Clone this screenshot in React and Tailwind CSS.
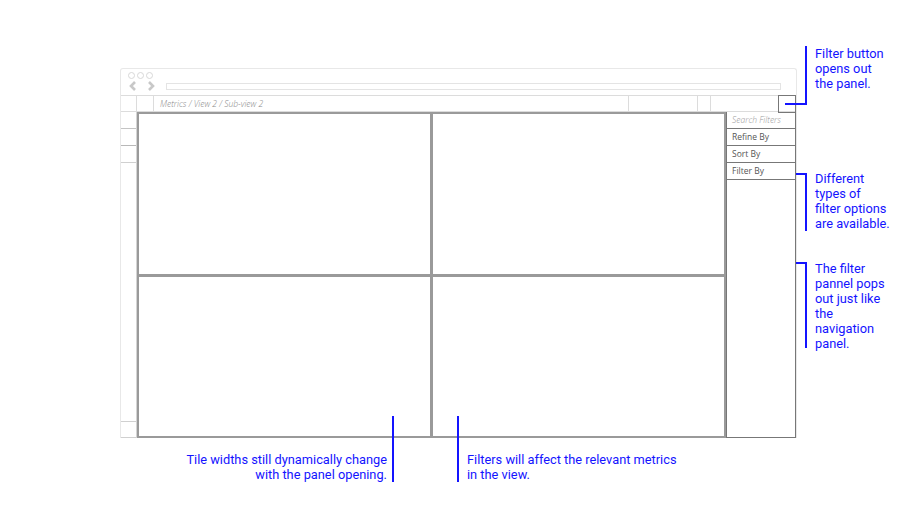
import React from 'react';

const ui = { fontFamily: '"Open Sans", "Liberation Sans", sans-serif' };
const noteFont = { fontFamily: 'Roboto, "Liberation Sans", sans-serif' };

function Note({ className, lines, align = 'left' }) {
  return (
    <div
      className={`absolute text-[12.8px] leading-[15px] text-[#1414ff] ${align === 'right' ? 'text-right' : ''} ${className}`}
      style={noteFont}
    >
      {lines.map((l, i) => (
        <div key={i} className="whitespace-nowrap h-[15px]">{l}</div>
      ))}
    </div>
  );
}

function Chrome() {
  return (
    <div className="h-[26px] relative">
      <div className="flex gap-[2px] pl-[7px] pt-[3px]">
        {[0, 1, 2].map(i => (
          <span key={i} className="w-[7px] h-[7px] rounded-full border border-[#d8d8d8]" />
        ))}
      </div>
      <div className="flex items-center pl-[6px] pt-[2px]">
        <svg width="34" height="10" viewBox="0 0 34 10" className="shrink-0">
          <path d="M8 1 L4 5 L8 9" fill="none" stroke="#c8c8c8" strokeWidth="2.6" />
          <path d="M22 1 L26 5 L22 9" fill="none" stroke="#c8c8c8" strokeWidth="2.6" />
        </svg>
        <div className="ml-[5px] w-[615px] h-[7px] border border-[#e4e4e4]" />
      </div>
    </div>
  );
}

function Toolbar() {
  return (
    <div className="h-[17px] flex border-t border-b border-[#dcdcdc]">
      <div className="w-[16px] border-r border-[#dcdcdc]" />
      <div className="w-[17px] border-r border-[#dcdcdc]" />
      <div className="flex-1 pl-[6px] text-[8.5px] italic text-[#888] font-light leading-[15px]">
        Metrics / View 2 / Sub-view 2
      </div>
      <div className="w-[69px] border-l border-[#dcdcdc]" />
      <div className="w-[13px] border-l border-[#dcdcdc]" />
      <div className="w-[68px] border-l border-[#dcdcdc]" />
      <div className="w-[18px] -mt-px h-[18px] border border-[#777]" />
    </div>
  );
}

function FilterPanel() {
  const items = ['Refine By', 'Sort By', 'Filter By'];
  return (
    <div className="w-[70px] border border-[#777] border-t-0 flex flex-col text-[8.5px]">
      <div className="h-[17px] border-b border-[#777] pl-[5px] leading-[16px] italic font-light text-[#999]">Search Filters</div>
      {items.map(t => (
        <div key={t} className="h-[17px] border-b border-[#777] pl-[5px] leading-[16px] text-[#555]">{t}</div>
      ))}
    </div>
  );
}

export default function App() {
  return (
    <div className="relative w-[900px] h-[506px] bg-white overflow-hidden pt-[68px] pl-[120px]" style={ui}>
      <div className="w-[677px] h-[370px] border border-[#e8e8e8] border-b-0 rounded-t-[3px] flex flex-col">
        <Chrome />
        <Toolbar />
        <div className="flex-1 flex">
          <div className="w-[16px] border-r border-[#d4d4d4] flex flex-col">
            <div className="h-[17px] border-b border-[#c4c4c4]" />
            <div className="h-[17px] border-b border-[#b8b8b8]" />
            <div className="h-[17px] border-b border-[#d0d0d0]" />
            <div className="flex-1" />
            <div className="h-[17px] border-t border-[#d0d0d0] border-b border-b-[#d0d0d0]" />
          </div>
          <div className="flex-1 grid grid-cols-2 grid-rows-2 gap-[3px] bg-[#9a9a9a] p-[2px]">
            <div className="bg-white" />
            <div className="bg-white" />
            <div className="bg-white" />
            <div className="bg-white" />
          </div>
          <FilterPanel />
        </div>
      </div>

      {/* annotations */}
      <div className="absolute left-[805px] top-[46px] w-[2px] h-[59px] bg-[#1414ff]" />
      <div className="absolute left-[785px] top-[103px] w-[22px] h-[2px] bg-[#1414ff]" />
      <Note className="left-[815px] top-[46px]" lines={['Filter button', 'opens out', 'the panel.']} />

      <div className="absolute left-[805px] top-[173px] w-[2px] h-[58px] bg-[#1414ff]" />
      <div className="absolute left-[796px] top-[173px] w-[11px] h-[2px] bg-[#1414ff]" />
      <Note className="left-[815px] top-[171px]" lines={['Different', 'types of', 'filter options', 'are available.']} />

      <div className="absolute left-[805px] top-[262px] w-[2px] h-[86px] bg-[#1414ff]" />
      <div className="absolute left-[796px] top-[262px] w-[11px] h-[2px] bg-[#1414ff]" />
      <Note className="left-[815px] top-[261px]" lines={['The filter', 'pannel pops', 'out just like', 'the', 'navigation', 'panel.']} />

      <div className="absolute left-[392px] top-[416px] w-[2px] h-[66px] bg-[#1414ff]" />
      <Note className="right-[513px] top-[452px]" align="right" lines={['Tile widths still dynamically change', 'with the panel opening.']} />

      <div className="absolute left-[457px] top-[416px] w-[2px] h-[66px] bg-[#1414ff]" />
      <Note className="left-[467px] top-[452px]" lines={['Filters will affect the relevant metrics', 'in the view.']} />
    </div>
  );
}
